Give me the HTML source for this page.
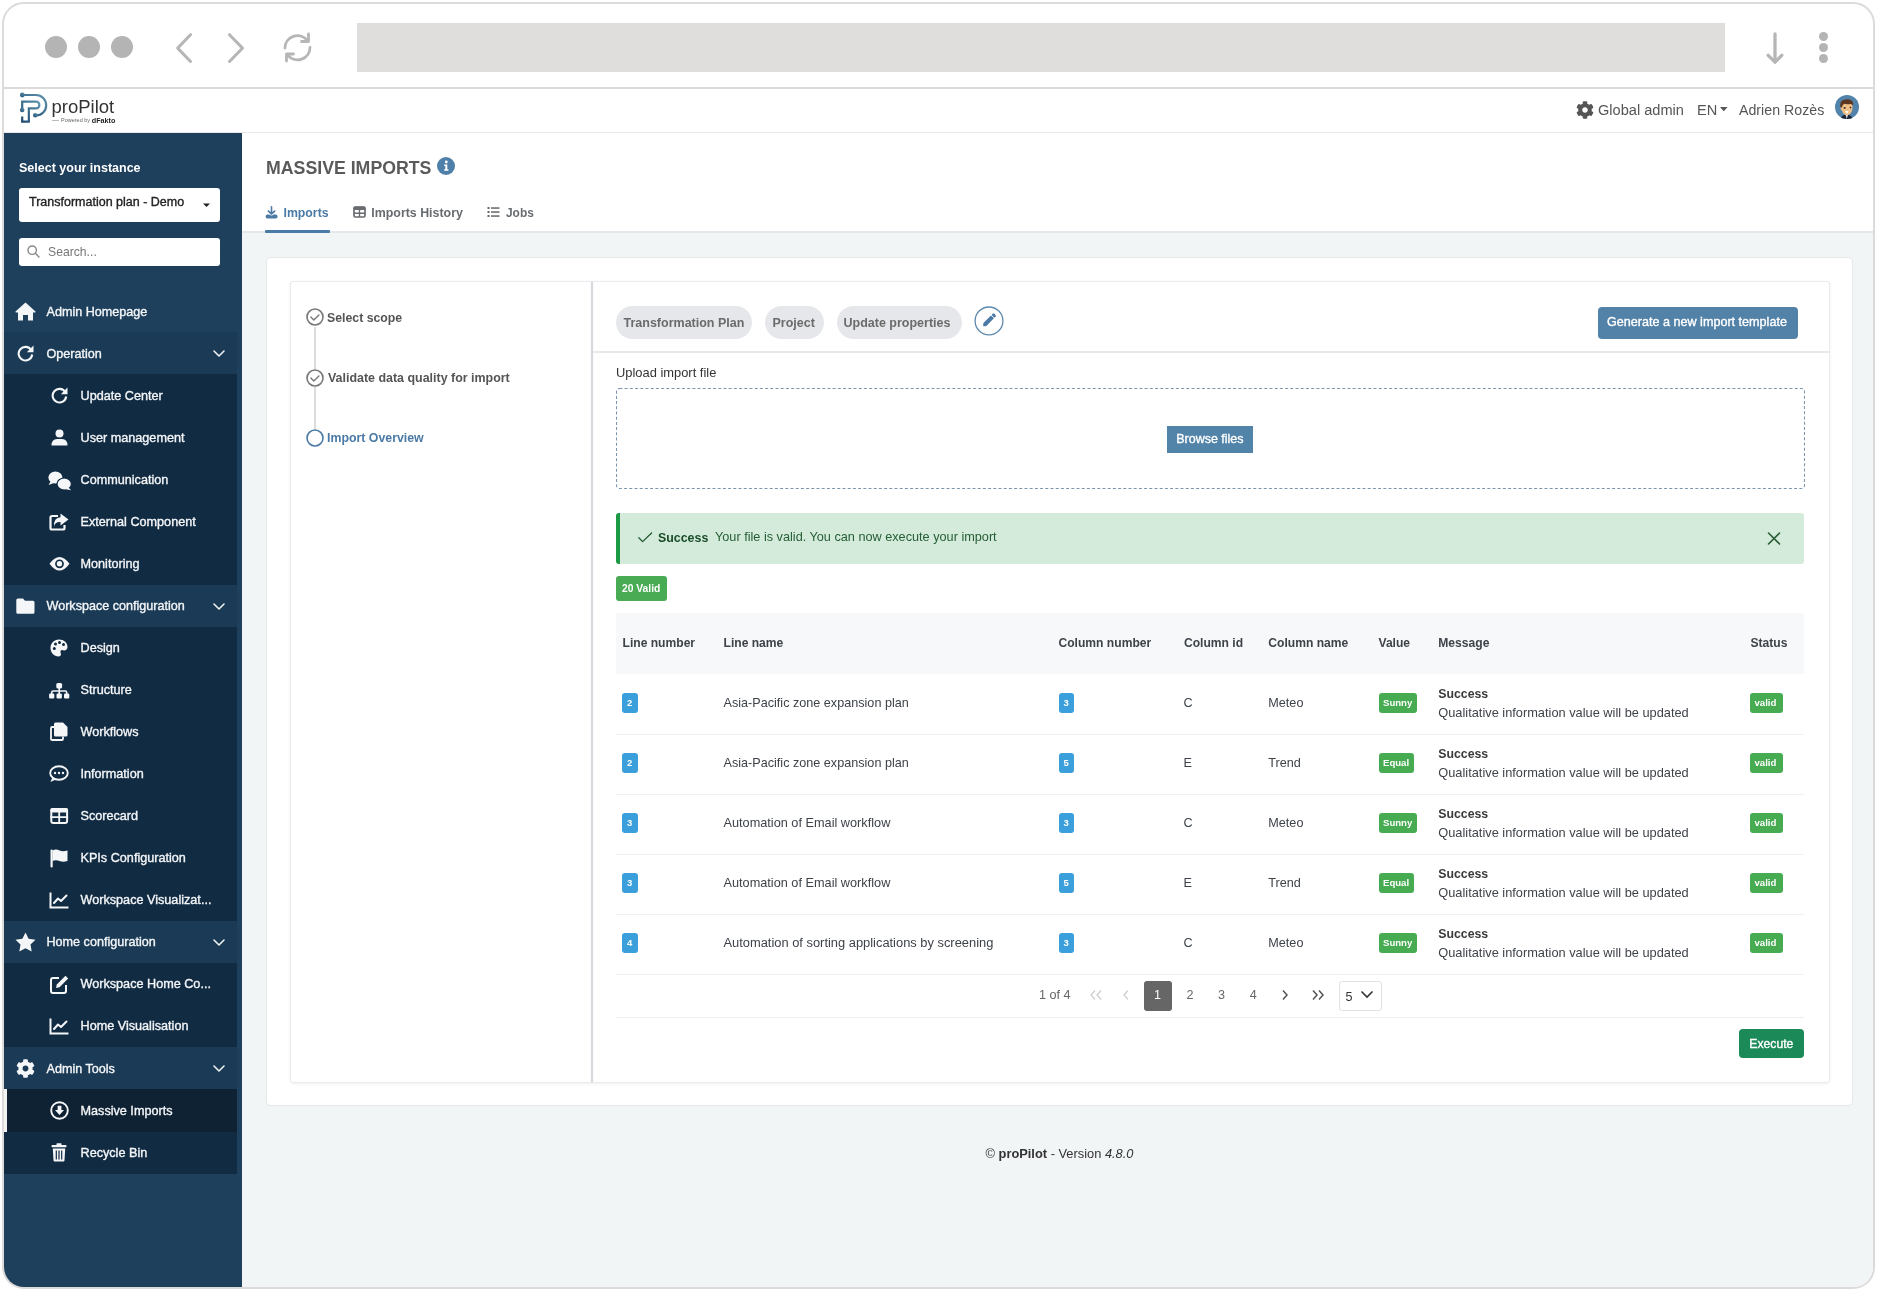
<!DOCTYPE html><html><head><meta charset="utf-8"><style>
html,body{margin:0;padding:0;width:1879px;height:1293px;overflow:hidden;background:#fff;}
body{font-family:"Liberation Sans",sans-serif;position:relative;}
.frame{position:absolute;left:2px;top:2px;width:1873px;height:1287px;box-sizing:border-box;border:2px solid #dcdbd9;border-radius:22px;overflow:hidden;background:#fff;}
.inner{position:absolute;left:-4px;top:-4px;width:1879px;height:1293px;will-change:transform;}
.t{position:absolute;white-space:nowrap;line-height:1;}
.r{position:absolute;}
</style></head><body><div class="frame"><div class="inner">

<div class="r" style="left:45px;top:36px;width:22px;height:22px;background:#b4b4b4;border-radius:50%;"></div>
<div class="r" style="left:78px;top:36px;width:22px;height:22px;background:#b4b4b4;border-radius:50%;"></div>
<div class="r" style="left:111px;top:36px;width:22px;height:22px;background:#b4b4b4;border-radius:50%;"></div>
<svg class="r" style="left:170px;top:28px;" width="30" height="40" viewBox="0 0 30 40"><polyline points="20.5,6.7 7.7,20.1 20.5,33.5" fill="none" stroke="#b6b6b6" stroke-width="3" stroke-linecap="round" stroke-linejoin="round"/></svg>
<svg class="r" style="left:222px;top:28px;" width="30" height="40" viewBox="0 0 30 40"><polyline points="7.5,6.7 20.5,20.1 7.5,33.5" fill="none" stroke="#b6b6b6" stroke-width="3" stroke-linecap="round" stroke-linejoin="round"/></svg>
<svg class="r" style="left:280px;top:30px;" width="36" height="36" viewBox="0 0 36 36"><g fill="none" stroke="#b6b6b6" stroke-width="2.8" stroke-linecap="round" stroke-linejoin="round"><path d="M5,18 A12.5,12.5 0 0 1 27,10"/><polyline points="28.5,4 28.5,11.5 21.5,11.5"/><path d="M30,17.5 A12.5,12.5 0 0 1 8,25.5"/><polyline points="6.5,31 6.5,24 13.5,24"/></g></svg>
<div class="r" style="left:357px;top:23px;width:1368px;height:49px;background:#dfdedc;"></div>
<svg class="r" style="left:1762px;top:28px;" width="26" height="40" viewBox="0 0 26 40"><g fill="none" stroke="#b6b6b6" stroke-width="3.3" stroke-linecap="round" stroke-linejoin="round"><line x1="13" y1="6" x2="13" y2="33.5"/><polyline points="6.2,27.3 13,34.2 19.8,27.3"/></g></svg>
<div class="r" style="left:1819px;top:31.700000000000003px;width:9px;height:9.0px;background:#b4b4b4;border-radius:50%;"></div>
<div class="r" style="left:1819px;top:42.5px;width:9px;height:9.0px;background:#b4b4b4;border-radius:50%;"></div>
<div class="r" style="left:1819px;top:53.7px;width:9px;height:9.0px;background:#b4b4b4;border-radius:50%;"></div>
<div class="r" style="left:4px;top:87px;width:1869px;height:2px;background:#dcdbd9;"></div>
<div class="r" style="left:4px;top:132px;width:1869px;height:1px;background:#e8e8e8;"></div>
<svg class="r" style="left:14px;top:88px;" width="40" height="40" viewBox="0 0 40 40"><defs><linearGradient id="lg" x1="1" y1="0" x2="0" y2="1"><stop offset="0" stop-color="#5e95ae"/><stop offset="1" stop-color="#1f4a70"/></linearGradient></defs><g fill="none" stroke="url(#lg)" stroke-width="2.2"><path d="M8.3,7 H22 A10.2,10.2 0 0 1 22,27.4 L21.3,27.4"/><path d="M8.2,20 V13.6 H22 A3.4,3.4 0 0 1 22,20.4 H14.85 V33.6 H8.2 V28.5"/></g><g fill="url(#lg)"><circle cx="8.35" cy="7" r="2.4"/><circle cx="8.2" cy="22" r="2.3"/><circle cx="21.3" cy="27.3" r="2.3"/></g></svg>
<div class="t " style="left:51.50px;top:97.84px;font-size:18.5px;font-weight:normal;color:#333;">proPilot</div>
<div class="r" style="left:52px;top:120px;width:7px;height:1px;background:#bbb;"></div>
<div class="t " style="left:61.00px;top:118.24px;font-size:5.5px;font-weight:normal;color:#666;">Powered by</div>
<div class="t " style="left:91.80px;top:117.41px;font-size:7.2px;font-weight:bold;color:#222;">dFakto</div>
<svg class="r" style="left:1576px;top:100.5px;" width="18" height="18" viewBox="0 0 512 512"><path fill="#555" d="M487.4 315.7l-42.6-24.6c4.3-23.2 4.3-47 0-70.2l42.6-24.6c4.9-2.8 7.1-8.6 5.5-14-11.1-35.6-30-67.8-54.7-94.6-3.8-4.1-10-5.1-14.8-2.3L380.8 110c-17.9-15.4-38.5-27.3-60.8-35.1V25.8c0-5.6-3.9-10.5-9.4-11.7-36.7-8.2-74.3-7.8-109.2 0-5.5 1.2-9.4 6.1-9.4 11.7V75c-22.2 7.9-42.8 19.8-60.8 35.1L88.7 85.5c-4.9-2.8-11-1.9-14.8 2.3-24.7 26.7-43.6 58.9-54.7 94.6-1.7 5.4.6 11.2 5.5 14L67.3 221c-4.3 23.2-4.3 47 0 70.2l-42.6 24.6c-4.9 2.8-7.1 8.6-5.5 14 11.1 35.6 30 67.8 54.7 94.6 3.8 4.1 10 5.1 14.8 2.3l42.6-24.6c17.9 15.4 38.5 27.3 60.8 35.1v49.2c0 5.6 3.9 10.5 9.4 11.7 36.7 8.2 74.3 7.8 109.2 0 5.5-1.2 9.4-6.1 9.4-11.7v-49.2c22.2-7.9 42.8-19.8 60.8-35.1l42.6 24.6c4.9 2.8 11 1.9 14.8-2.3 24.7-26.7 43.6-58.9 54.7-94.6 1.5-5.5-.7-11.3-5.6-14.1zM256 336c-44.1 0-80-35.9-80-80s35.9-80 80-80 80 35.9 80 80-35.9 80-80 80z"/></svg>
<div class="t " style="left:1597.80px;top:101.93px;font-size:15.2px;font-weight:normal;color:#555;transform:scaleX(0.96);transform-origin:0 0;">Global admin</div>
<div class="t " style="left:1696.80px;top:101.93px;font-size:15.2px;font-weight:normal;color:#555;transform:scaleX(0.96);transform-origin:0 0;">EN</div>
<svg class="r" style="left:1719.5px;top:107px;" width="8" height="5" viewBox="0 0 8 5"><polygon points="0,0 7.5,0 3.75,4.3" fill="#555"/></svg>
<div class="t " style="left:1739.30px;top:101.93px;font-size:15.2px;font-weight:normal;color:#555;transform:scaleX(0.935);transform-origin:0 0;">Adrien Rozès</div>
<svg class="r" style="left:1835px;top:95px;" width="24" height="24" viewBox="0 0 24 24"><defs><clipPath id="av"><circle cx="12" cy="12" r="12"/></clipPath></defs><circle cx="12" cy="12" r="12" fill="#5283ab"/><g clip-path="url(#av)"><path d="M5.5,24 Q6,20 11.5,19.5 Q17,20 17.5,24 Z" fill="#1c2636"/><path d="M10.5,19.5 L11.8,24 L13,19.5 Z" fill="#e8eef4"/><path d="M6,12 Q5.5,9 8,8 L16.5,8.5 Q18,10 17.3,14 Q17,19 12.5,20.3 Q8,20 7,15.5 Q5.6,15 5.5,13 Z" fill="#f0bf85"/><path d="M5.2,11.5 Q4.8,6 9,4.8 Q13,3.5 16.5,5.5 Q18.8,7 18,10.5 Q16.5,8.8 14,9.2 Q11,9.5 9,8.8 Q7,11 6.6,13 Z" fill="#5b3621"/><ellipse cx="9.6" cy="12.9" rx="1" ry="0.9" fill="#2a2420"/><ellipse cx="15.5" cy="12.6" rx="0.9" ry="0.8" fill="#2a2420"/><path d="M10.2,16.3 Q12,15.6 13.6,16.3 Q13.2,18.3 11.9,18.4 Q10.6,18.3 10.2,16.3 Z" fill="#fff"/></g></svg>
<div class="r" style="left:4px;top:133px;width:238px;height:1154px;background:#1f405d;"></div>
<div class="t " style="left:19.00px;top:162.22px;font-size:12.5px;font-weight:bold;color:#fff;">Select your instance</div>
<div class="r" style="left:19px;top:188px;width:200.5px;height:34px;background:#fff;border-radius:3px;"></div>
<div class="t " style="left:29.00px;top:196.32px;font-size:12.5px;font-weight:normal;color:#222;-webkit-text-stroke:0.35px #222;">Transformation plan - Demo</div>
<svg class="r" style="left:203px;top:203px;" width="7" height="5" viewBox="0 0 7 5"><polygon points="0,0.5 7,0.5 3.5,4" fill="#222"/></svg>
<div class="r" style="left:19px;top:238px;width:200.5px;height:28px;background:#fff;border-radius:3px;"></div>
<svg class="r" style="left:27px;top:245px;" width="13" height="13" viewBox="0 0 13 13"><g fill="none" stroke="#888" stroke-width="1.4"><circle cx="5.2" cy="5.2" r="4.2"/><line x1="8.3" y1="8.3" x2="12" y2="12" stroke-linecap="round"/></g></svg>
<div class="t " style="left:48.00px;top:246.47px;font-size:12.2px;font-weight:normal;color:#777;">Search...</div>
<div class="r" style="left:4px;top:332.4px;width:233px;height:42.06px;background:#1a3a55;"></div>
<div class="r" style="left:4px;top:584.76px;width:233px;height:42.059999999999945px;background:#1a3a55;"></div>
<div class="r" style="left:4px;top:921.24px;width:233px;height:42.06000000000006px;background:#1a3a55;"></div>
<div class="r" style="left:4px;top:1047.42px;width:233px;height:42.059999999999945px;background:#1a3a55;"></div>
<div class="r" style="left:4px;top:374.46px;width:233px;height:210.3px;background:#112b42;"></div>
<div class="r" style="left:4px;top:626.8199999999999px;width:233px;height:294.4200000000001px;background:#112b42;"></div>
<div class="r" style="left:4px;top:963.3000000000001px;width:233px;height:84.12px;background:#112b42;"></div>
<div class="r" style="left:4px;top:1089.48px;width:233px;height:84.11999999999989px;background:#112b42;"></div>
<div class="r" style="left:4px;top:1089.48px;width:233px;height:42.059999999999945px;background:#0f2234;"></div>
<div class="r" style="left:4px;top:1089.48px;width:3px;height:42.059999999999945px;background:#f4f4f4;"></div>
<svg class="r" style="left:15px;top:302px;" width="21" height="19" viewBox="0 0 21 19"><path fill="#f4f6f8" d="M10.5,0.5 L20.5,9.5 Q21,10.5 19.8,10.5 L18,10.5 L18,18.5 L13,18.5 L13,13 L8,13 L8,18.5 L3,18.5 L3,10.5 L1.2,10.5 Q0,10.5 0.5,9.5 Z"/></svg>
<div class="t " style="left:46.50px;top:305.53px;font-size:12.6px;font-weight:normal;color:#f4f6f8;-webkit-text-stroke:0.35px #f4f6f8;">Admin Homepage</div>
<svg class="r" style="left:17px;top:345.12999999999994px;" width="17" height="17" viewBox="0 0 17 17"><g fill="none" stroke="#f4f6f8" stroke-width="2.1"><path d="M14.2,5 A6.8,6.8 0 1 0 15.2,9.5"/></g><polygon fill="#f4f6f8" points="16.5,0.5 16.5,7.2 9.8,7.2"/></svg>
<div class="t " style="left:46.50px;top:347.56px;font-size:12.6px;font-weight:normal;color:#f4f6f8;-webkit-text-stroke:0.35px #f4f6f8;">Operation</div>
<svg class="r" style="left:212.5px;top:350.42999999999995px;" width="13" height="8" viewBox="0 0 13 8"><polyline points="1,1 6,6 11,1" fill="none" stroke="#f4f6f8" stroke-width="1.5" stroke-linecap="round" stroke-linejoin="round"/></svg>
<svg class="r" style="left:16px;top:597.79px;" width="19" height="16" viewBox="0 0 19 16"><path d="M1.8,0.5 H7 L9,2.8 H17 Q18.5,2.8 18.5,4.3 V14.2 Q18.5,15.7 17,15.7 H1.8 Q0.3,15.7 0.3,14.2 V2 Q0.3,0.5 1.8,0.5 Z" fill="#f4f6f8"/></svg>
<div class="t " style="left:46.50px;top:599.92px;font-size:12.6px;font-weight:normal;color:#f4f6f8;-webkit-text-stroke:0.35px #f4f6f8;">Workspace configuration</div>
<svg class="r" style="left:212.5px;top:602.79px;" width="13" height="8" viewBox="0 0 13 8"><polyline points="1,1 6,6 11,1" fill="none" stroke="#f4f6f8" stroke-width="1.5" stroke-linecap="round" stroke-linejoin="round"/></svg>
<svg class="r" style="left:15px;top:931.77px;" width="21" height="20" viewBox="0 0 21 20"><polygon fill="#f4f6f8" points="10.5,0.5 13.6,6.7 20.5,7.7 15.5,12.6 16.7,19.5 10.5,16.2 4.3,19.5 5.5,12.6 0.5,7.7 7.4,6.7"/></svg>
<div class="t " style="left:46.50px;top:936.40px;font-size:12.6px;font-weight:normal;color:#f4f6f8;-webkit-text-stroke:0.35px #f4f6f8;">Home configuration</div>
<svg class="r" style="left:212.5px;top:939.27px;" width="13" height="8" viewBox="0 0 13 8"><polyline points="1,1 6,6 11,1" fill="none" stroke="#f4f6f8" stroke-width="1.5" stroke-linecap="round" stroke-linejoin="round"/></svg>
<svg class="r" style="left:16px;top:1058.95px;" width="19" height="19" viewBox="0 0 512 512"><path fill="#f4f6f8" d="M487.4 315.7l-42.6-24.6c4.3-23.2 4.3-47 0-70.2l42.6-24.6c4.9-2.8 7.1-8.6 5.5-14-11.1-35.6-30-67.8-54.7-94.6-3.8-4.1-10-5.1-14.8-2.3L380.8 110c-17.9-15.4-38.5-27.3-60.8-35.1V25.8c0-5.6-3.9-10.5-9.4-11.7-36.7-8.2-74.3-7.8-109.2 0-5.5 1.2-9.4 6.1-9.4 11.7V75c-22.2 7.9-42.8 19.8-60.8 35.1L88.7 85.5c-4.9-2.8-11-1.9-14.8 2.3-24.7 26.7-43.6 58.9-54.7 94.6-1.7 5.4.6 11.2 5.5 14L67.3 221c-4.3 23.2-4.3 47 0 70.2l-42.6 24.6c-4.9 2.8-7.1 8.6-5.5 14 11.1 35.6 30 67.8 54.7 94.6 3.8 4.1 10 5.1 14.8 2.3l42.6-24.6c17.9 15.4 38.5 27.3 60.8 35.1v49.2c0 5.6 3.9 10.5 9.4 11.7 36.7 8.2 74.3 7.8 109.2 0 5.5-1.2 9.4-6.1 9.4-11.7v-49.2c22.2-7.9 42.8-19.8 60.8-35.1l42.6 24.6c4.9 2.8 11 1.9 14.8-2.3 24.7-26.7 43.6-58.9 54.7-94.6 1.5-5.5-.7-11.3-5.6-14.1zM256 336c-44.1 0-80-35.9-80-80s35.9-80 80-80 80 35.9 80 80-35.9 80-80 80z"/></svg>
<div class="t " style="left:46.50px;top:1062.58px;font-size:12.6px;font-weight:normal;color:#f4f6f8;-webkit-text-stroke:0.35px #f4f6f8;">Admin Tools</div>
<svg class="r" style="left:212.5px;top:1065.45px;" width="13" height="8" viewBox="0 0 13 8"><polyline points="1,1 6,6 11,1" fill="none" stroke="#f4f6f8" stroke-width="1.5" stroke-linecap="round" stroke-linejoin="round"/></svg>
<svg class="r" style="left:51px;top:387.19px;" width="17" height="17" viewBox="0 0 17 17"><g fill="none" stroke="#f4f6f8" stroke-width="2.1"><path d="M14.2,5 A6.8,6.8 0 1 0 15.2,9.5"/></g><polygon fill="#f4f6f8" points="16.5,0.5 16.5,7.2 9.8,7.2"/></svg>
<div class="t " style="left:80.50px;top:389.58px;font-size:12.65px;font-weight:normal;color:#f4f6f8;-webkit-text-stroke:0.35px #f4f6f8;">Update Center</div>
<svg class="r" style="left:51px;top:429.04999999999995px;" width="17" height="17" viewBox="0 0 17 17"><circle cx="8.5" cy="4.5" r="4" fill="#f4f6f8"/><path d="M0.5,16.5 Q0.5,10 6,10 L11,10 Q16.5,10 16.5,16.5 Z" fill="#f4f6f8"/></svg>
<div class="t " style="left:80.50px;top:431.64px;font-size:12.65px;font-weight:normal;color:#f4f6f8;-webkit-text-stroke:0.35px #f4f6f8;">User management</div>
<svg class="r" style="left:47.5px;top:470.91px;" width="24" height="20" viewBox="0 0 24 20"><ellipse cx="7.4" cy="6.6" rx="7" ry="6" fill="#f4f6f8"/><path d="M2.5,10.5 L0.6,14 L6,12 Z" fill="#f4f6f8"/><ellipse cx="16.2" cy="13" rx="7.2" ry="6" fill="#f4f6f8" stroke="#112b42" stroke-width="1.2"/><path d="M20.5,16.5 L23.2,19.2 L17.5,18.2 Z" fill="#f4f6f8"/></svg>
<div class="t " style="left:80.50px;top:473.70px;font-size:12.65px;font-weight:normal;color:#f4f6f8;-webkit-text-stroke:0.35px #f4f6f8;">Communication</div>
<svg class="r" style="left:49px;top:512.67px;" width="20" height="18" viewBox="0 0 20 18"><path d="M9,3 H3 Q1.5,3 1.5,4.5 V15 Q1.5,16.5 3,16.5 H14 Q15.5,16.5 15.5,15 V12" fill="none" stroke="#f4f6f8" stroke-width="2.2"/><path d="M11.5,0.5 L19.5,6.5 L11.5,12.5 V9 Q6,8.5 5,13.5 Q4.5,4.5 11.5,4.2 Z" fill="#f4f6f8"/></svg>
<div class="t " style="left:80.50px;top:515.76px;font-size:12.65px;font-weight:normal;color:#f4f6f8;-webkit-text-stroke:0.35px #f4f6f8;">External Component</div>
<svg class="r" style="left:49px;top:556.23px;" width="21" height="16" viewBox="0 0 21 16"><path d="M0.5,7.8 Q10.5,-5.8 20.5,7.8 Q10.5,21.4 0.5,7.8 Z" fill="#f4f6f8"/><circle cx="10.5" cy="7.8" r="4.4" fill="#112b42"/><circle cx="10.5" cy="7.8" r="2.7" fill="#f4f6f8"/></svg>
<div class="t " style="left:80.50px;top:557.82px;font-size:12.65px;font-weight:normal;color:#f4f6f8;-webkit-text-stroke:0.35px #f4f6f8;">Monitoring</div>
<svg class="r" style="left:50px;top:638.8499999999999px;" width="18" height="18" viewBox="0 0 18 18"><path d="M9,0.5 C14,0.5 17.5,3.8 17.5,8 C17.5,11 15,11.8 13,11.2 C11,10.8 10,12 10.7,14 C11.5,16.3 10.5,17.5 8.5,17.5 C4,17.5 0.5,13.5 0.5,9 C0.5,4.2 4,0.5 9,0.5 Z" fill="#f4f6f8"/><g fill="#112b42"><circle cx="4.3" cy="9.5" r="1.5"/><circle cx="5.5" cy="5" r="1.5"/><circle cx="9.5" cy="3.5" r="1.5"/><circle cx="13.5" cy="5.5" r="1.5"/></g></svg>
<div class="t " style="left:80.50px;top:641.94px;font-size:12.65px;font-weight:normal;color:#f4f6f8;-webkit-text-stroke:0.35px #f4f6f8;">Design</div>
<svg class="r" style="left:49px;top:680.91px;" width="21" height="18" viewBox="0 0 21 18"><g fill="#f4f6f8"><rect x="7.3" y="1.9" width="5.8" height="5.6" rx="1.6"/><rect x="0.1" y="12.6" width="5.2" height="4.8" rx="1.2"/><rect x="7.5" y="12.6" width="5.4" height="4.8" rx="1.2"/><rect x="15" y="12.6" width="5.3" height="4.8" rx="1.2"/></g><path d="M10.2,7 V13 M2.7,13 V11.5 Q2.7,10 4.2,10 H16.2 Q17.7,10 17.7,11.5 V13" fill="none" stroke="#f4f6f8" stroke-width="1.6"/></svg>
<div class="t " style="left:80.50px;top:684.00px;font-size:12.65px;font-weight:normal;color:#f4f6f8;-webkit-text-stroke:0.35px #f4f6f8;">Structure</div>
<svg class="r" style="left:50px;top:722.47px;" width="18" height="19" viewBox="0 0 18 19"><path d="M5.5,0.5 H13 L17.5,5 V13 Q17.5,14.5 16,14.5 H5.5 Q4,14.5 4,13 V2 Q4,0.5 5.5,0.5 Z" fill="#f4f6f8"/><path d="M4,5 H2.2 Q1,5 1,6.2 V17 Q1,18 2.2,18 H11.8 Q13,18 13,17 V14.5" fill="none" stroke="#f4f6f8" stroke-width="1.8"/></svg>
<div class="t " style="left:80.50px;top:726.06px;font-size:12.65px;font-weight:normal;color:#f4f6f8;-webkit-text-stroke:0.35px #f4f6f8;">Workflows</div>
<svg class="r" style="left:49px;top:765.03px;" width="20" height="18" viewBox="0 0 20 18"><ellipse cx="10" cy="8" rx="8.8" ry="6.8" fill="none" stroke="#f4f6f8" stroke-width="1.9"/><path d="M3.5,12.5 L1.3,17 L7,14.5" fill="#f4f6f8"/><g fill="#f4f6f8"><circle cx="6" cy="8" r="1.2"/><circle cx="10" cy="8" r="1.2"/><circle cx="14" cy="8" r="1.2"/></g></svg>
<div class="t " style="left:80.50px;top:768.12px;font-size:12.65px;font-weight:normal;color:#f4f6f8;-webkit-text-stroke:0.35px #f4f6f8;">Information</div>
<svg class="r" style="left:49px;top:808.0899999999999px;" width="20" height="17" viewBox="0 0 20 17"><rect x="2.3" y="1.1" width="15.8" height="13.8" rx="2" fill="none" stroke="#f4f6f8" stroke-width="2"/><rect x="1.3" y="0.1" width="17.8" height="4.4" rx="2" fill="#f4f6f8"/><path d="M1.3,9.2 H19.1 M10.2,4 V15" stroke="#f4f6f8" stroke-width="1.8"/></svg>
<div class="t " style="left:80.50px;top:810.18px;font-size:12.65px;font-weight:normal;color:#f4f6f8;-webkit-text-stroke:0.35px #f4f6f8;">Scorecard</div>
<svg class="r" style="left:50px;top:848.65px;" width="18" height="19" viewBox="0 0 18 19"><rect x="0.5" y="0.5" width="2.2" height="18" rx="1" fill="#f4f6f8"/><path d="M2.5,1.5 Q6,-0.5 9.5,1.5 Q13,3 17.5,1.5 V12 Q13,13.5 9.5,12 Q6,10.5 2.5,12 Z" fill="#f4f6f8"/></svg>
<div class="t " style="left:80.50px;top:852.24px;font-size:12.65px;font-weight:normal;color:#f4f6f8;-webkit-text-stroke:0.35px #f4f6f8;">KPIs Configuration</div>
<svg class="r" style="left:49px;top:891.7099999999999px;" width="20" height="17" viewBox="0 0 20 17"><path d="M1.5,0.5 V15.5 H19.5" fill="none" stroke="#f4f6f8" stroke-width="2"/><polyline points="5,11 9,6.5 12,9 17.5,3.5" fill="none" stroke="#f4f6f8" stroke-width="2" stroke-linejoin="round" stroke-linecap="round"/></svg>
<div class="t " style="left:80.50px;top:894.30px;font-size:12.65px;font-weight:normal;color:#f4f6f8;-webkit-text-stroke:0.35px #f4f6f8;">Workspace Visualizat...</div>
<svg class="r" style="left:50px;top:974.83px;" width="19" height="19" viewBox="0 0 19 19"><path d="M9,3 H3 Q1,3 1,5 V16 Q1,18 3,18 H14 Q16,18 16,16 V10" fill="none" stroke="#f4f6f8" stroke-width="2"/><path d="M15.5,0.8 L18.2,3.5 L9.5,12.2 L6,13 L6.8,9.5 Z" fill="#f4f6f8"/></svg>
<div class="t " style="left:80.50px;top:978.42px;font-size:12.65px;font-weight:normal;color:#f4f6f8;-webkit-text-stroke:0.35px #f4f6f8;">Workspace Home Co...</div>
<svg class="r" style="left:49px;top:1017.8900000000001px;" width="20" height="17" viewBox="0 0 20 17"><path d="M1.5,0.5 V15.5 H19.5" fill="none" stroke="#f4f6f8" stroke-width="2"/><polyline points="5,11 9,6.5 12,9 17.5,3.5" fill="none" stroke="#f4f6f8" stroke-width="2" stroke-linejoin="round" stroke-linecap="round"/></svg>
<div class="t " style="left:80.50px;top:1020.48px;font-size:12.65px;font-weight:normal;color:#f4f6f8;-webkit-text-stroke:0.35px #f4f6f8;">Home Visualisation</div>
<svg class="r" style="left:50px;top:1101.01px;" width="19" height="19" viewBox="0 0 19 19"><circle cx="9.5" cy="9.5" r="8.3" fill="none" stroke="#f4f6f8" stroke-width="1.9"/><path d="M7.6,4.8 H11.4 V9 H14 L9.5,14 L5,9 H7.6 Z" fill="#f4f6f8"/></svg>
<div class="t " style="left:80.50px;top:1104.60px;font-size:12.65px;font-weight:normal;color:#f4f6f8;-webkit-text-stroke:0.35px #f4f6f8;">Massive Imports</div>
<svg class="r" style="left:51px;top:1143.07px;" width="16" height="19" viewBox="0 0 16 19"><rect x="0.5" y="2" width="15" height="2.3" rx="0.8" fill="#f4f6f8"/><rect x="5.5" y="0.3" width="5" height="2" rx="0.6" fill="#f4f6f8"/><path d="M1.8,5.5 H14.2 L13.5,17.5 Q13.4,18.6 12.3,18.6 H3.7 Q2.6,18.6 2.5,17.5 Z" fill="#f4f6f8"/><path d="M5.3,7.5 V16.5 M8,7.5 V16.5 M10.7,7.5 V16.5" stroke="#112b42" stroke-width="1.2"/></svg>
<div class="t " style="left:80.50px;top:1146.66px;font-size:12.65px;font-weight:normal;color:#f4f6f8;-webkit-text-stroke:0.35px #f4f6f8;">Recycle Bin</div>
<div class="r" style="left:242px;top:232px;width:1631px;height:1055px;background:#f2f5f6;"></div>
<div class="r" style="left:242px;top:231px;width:1631px;height:2px;background:#e4e8ec;"></div>
<div class="t " style="left:265.70px;top:158.74px;font-size:18.15px;font-weight:bold;color:#5a5a5a;transform:scaleX(0.977);transform-origin:0 0;">MASSIVE IMPORTS</div>
<svg class="r" style="left:436.5px;top:157px;" width="18" height="18" viewBox="0 0 18 18"><circle cx="9" cy="9" r="9" fill="#4f80a9"/><circle cx="9.3" cy="5" r="1.4" fill="#fff"/><path d="M7.2,7.6 H10.3 V12.3 H11.4 V13.8 H7.2 V12.3 H8.3 V9.1 H7.2 Z" fill="#fff"/></svg>
<svg class="r" style="left:265px;top:206px;" width="13" height="13" viewBox="0 0 13 13"><g fill="none" stroke="#4a7aa5" stroke-linecap="round" stroke-linejoin="round"><path d="M6.5,0.8 V7.4" stroke-width="1.6"/><polyline points="3.4,5.1 6.5,7.9 9.6,5.1" stroke-width="1.7"/></g><path d="M2.4,8.6 H4.4 Q6.5,10.4 8.6,8.6 H10.8 Q12.6,8.6 12.6,10.5 Q12.6,12.4 10.8,12.4 H2.4 Q0.6,12.4 0.6,10.5 Q0.6,8.6 2.4,8.6 Z" fill="#4a7aa5"/></svg>
<div class="t " style="left:283.50px;top:207.09px;font-size:12.3px;font-weight:bold;color:#4a7aa5;">Imports</div>
<div class="r" style="left:265px;top:230px;width:65px;height:3px;background:#4a7aa5;border-radius:1px;"></div>
<svg class="r" style="left:353px;top:206px;" width="13" height="12" viewBox="0 0 13 12"><rect x="1" y="1" width="11" height="10" rx="1.5" fill="none" stroke="#686c70" stroke-width="1.7"/><rect x="0.5" y="0.5" width="12" height="3.4" rx="1.5" fill="#686c70"/><path d="M1,7.2 H12 M6.5,3.5 V11" stroke="#686c70" stroke-width="1.4"/></svg>
<div class="t " style="left:371.30px;top:207.00px;font-size:12.4px;font-weight:bold;color:#686c70;">Imports History</div>
<svg class="r" style="left:487px;top:206px;" width="13" height="12" viewBox="0 0 13 12"><g fill="#666"><rect x="0.5" y="1" width="2" height="2"/><rect x="0.5" y="5" width="2" height="2"/><rect x="0.5" y="9" width="2" height="2"/><rect x="4" y="1.3" width="8.5" height="1.5"/><rect x="4" y="5.3" width="8.5" height="1.5"/><rect x="4" y="9.3" width="8.5" height="1.5"/></g></svg>
<div class="t " style="left:506.00px;top:207.93px;font-size:11.9px;font-weight:bold;color:#686c70;">Jobs</div>
<div class="r" style="left:267px;top:258px;width:1585px;height:847px;background:#fff;border-radius:4px;box-shadow:0 0 0 1px #e6e7e8,0 1px 2px rgba(0,0,0,0.03);"></div>
<div class="r" style="left:290.5px;top:282px;width:1538.5px;height:799.5px;background:#fff;border-radius:2px;box-shadow:0 0 0 1px #e9ebee,0 1px 4px rgba(0,0,0,0.10);"></div>
<div class="r" style="left:591px;top:282px;width:2px;height:799.5px;background:#d5d8dc;box-shadow:0 0 3px rgba(0,0,0,0.07);"></div>
<div class="r" style="left:314.3px;top:326.5px;width:2.0px;height:42.5px;background:#dcdcdc;"></div>
<div class="r" style="left:314.3px;top:386.5px;width:2.0px;height:42.5px;background:#dcdcdc;"></div>
<svg class="r" style="left:305.5px;top:308.2px;" width="18" height="18" viewBox="0 0 18 18"><circle cx="9" cy="9" r="8" fill="#fff" stroke="#777" stroke-width="1.6"/><polyline points="4.9,9 7.8,11.9 12.9,7" fill="none" stroke="#777" stroke-width="1.4" stroke-linecap="round" stroke-linejoin="round"/></svg>
<svg class="r" style="left:305.5px;top:368.6px;" width="18" height="18" viewBox="0 0 18 18"><circle cx="9" cy="9" r="8" fill="#fff" stroke="#777" stroke-width="1.6"/><polyline points="4.9,9 7.8,11.9 12.9,7" fill="none" stroke="#777" stroke-width="1.4" stroke-linecap="round" stroke-linejoin="round"/></svg>
<svg class="r" style="left:305.5px;top:428.5px;" width="18" height="18" viewBox="0 0 18 18"><circle cx="9" cy="9" r="8" fill="#fff" stroke="#4a7aa5" stroke-width="1.6"/></svg>
<div class="t " style="left:327.00px;top:312.19px;font-size:12.3px;font-weight:bold;color:#555;">Select scope</div>
<div class="t " style="left:328.00px;top:372.16px;font-size:12.45px;font-weight:bold;color:#555;">Validate data quality for import</div>
<div class="t " style="left:327.00px;top:432.25px;font-size:12.35px;font-weight:bold;color:#4a7aa5;">Import Overview</div>
<div class="r" style="left:616px;top:306px;width:136px;height:33px;background:#e5e7ea;border-radius:17px;"></div>
<div class="t " style="left:623.50px;top:316.82px;font-size:12.5px;font-weight:bold;color:#6b6b6b;">Transformation Plan</div>
<div class="r" style="left:765px;top:306px;width:58.5px;height:33px;background:#e5e7ea;border-radius:17px;"></div>
<div class="t " style="left:772.50px;top:316.82px;font-size:12.5px;font-weight:bold;color:#6b6b6b;">Project</div>
<div class="r" style="left:836.5px;top:306px;width:125.5px;height:33px;background:#e5e7ea;border-radius:17px;"></div>
<div class="t " style="left:843.50px;top:316.82px;font-size:12.5px;font-weight:bold;color:#6b6b6b;">Update properties</div>
<svg class="r" style="left:973.5px;top:305.5px;" width="30" height="30" viewBox="0 0 30 30"><circle cx="15" cy="14.9" r="13.9" fill="#fff" stroke="#5e89ae" stroke-width="1.3"/><g transform="rotate(-45 15.1 14.2)" fill="#4a7aa5"><path d="M9.5,12.1 H19.8 V16.3 H9.5 Q7.5,15.5 6.9,14.2 Q7.5,12.9 9.5,12.1 Z"/><rect x="20.5" y="12.1" width="2.9" height="4.2" rx="1.3"/></g></svg>
<div class="r" style="left:1597.5px;top:306.5px;width:200.5px;height:32.5px;background:#5282a8;border-radius:4px;"></div>
<div class="t " style="left:1607.00px;top:316.23px;font-size:12.6px;font-weight:normal;color:#fff;-webkit-text-stroke:0.35px #fff;">Generate a new import template</div>
<div class="r" style="left:593px;top:350.5px;width:1236px;height:2.0px;background:#e6e8ea;"></div>
<div class="t " style="left:616.00px;top:367.08px;font-size:12.9px;font-weight:normal;color:#333;">Upload import file</div>
<svg class="r" style="left:616px;top:388px;" width="1189" height="101" viewBox="0 0 1189 101"><rect x="0.5" y="0.5" width="1188" height="100" rx="3" fill="none" stroke="#7d96ad" stroke-width="1.1" stroke-dasharray="3 2.2"/></svg>
<div class="r" style="left:1167px;top:425.5px;width:86px;height:27.0px;background:#5283a9;"></div>
<div class="t " style="left:1176.20px;top:433.32px;font-size:12.5px;font-weight:normal;color:#fff;-webkit-text-stroke:0.35px #fff;">Browse files</div>
<div class="r" style="left:616px;top:512.5px;width:1188px;height:51.5px;background:#d4eadb;border-radius:3px;"></div>
<div class="r" style="left:616px;top:512.5px;width:4px;height:51.5px;background:#1d9a46;border-radius:3px 0 0 3px;"></div>
<svg class="r" style="left:637px;top:531px;" width="17" height="13" viewBox="0 0 17 13"><polyline points="1.8,6.8 5.6,10.6 14.6,2" fill="none" stroke="#1f5a30" stroke-width="1.3" stroke-linecap="round" stroke-linejoin="round"/></svg>
<div class="t " style="left:658.00px;top:531.70px;font-size:12.4px;font-weight:bold;color:#1a4d28;">Success</div>
<div class="t " style="left:715.00px;top:531.45px;font-size:12.7px;font-weight:normal;color:#245e34;">Your file is valid. You can now execute your import</div>
<svg class="r" style="left:1767px;top:531.5px;" width="14" height="13" viewBox="0 0 14 13"><path d="M1.5,1 L12.5,12 M12.5,1 L1.5,12" stroke="#255c33" stroke-width="1.6" stroke-linecap="round"/></svg>
<div class="r" style="left:616px;top:576px;width:50.5px;height:24.5px;background:#49ab54;border-radius:3px;"></div>
<div class="t " style="left:622.00px;top:583.78px;font-size:10.3px;font-weight:bold;color:#fff;">20 Valid</div>
<div class="r" style="left:616px;top:613px;width:1188px;height:60.5px;background:#f7f8fa;"></div>
<div class="t " style="left:622.50px;top:637.46px;font-size:12.1px;font-weight:bold;color:#3e4349;">Line number</div>
<div class="t " style="left:723.50px;top:637.46px;font-size:12.1px;font-weight:bold;color:#3e4349;">Line name</div>
<div class="t " style="left:1058.50px;top:637.46px;font-size:12.1px;font-weight:bold;color:#3e4349;">Column number</div>
<div class="t " style="left:1184.00px;top:637.46px;font-size:12.1px;font-weight:bold;color:#3e4349;">Column id</div>
<div class="t " style="left:1268.30px;top:637.46px;font-size:12.1px;font-weight:bold;color:#3e4349;">Column name</div>
<div class="t " style="left:1378.50px;top:637.46px;font-size:12.1px;font-weight:bold;color:#3e4349;">Value</div>
<div class="t " style="left:1438.30px;top:637.46px;font-size:12.1px;font-weight:bold;color:#3e4349;">Message</div>
<div class="t " style="left:1750.50px;top:637.46px;font-size:12.1px;font-weight:bold;color:#3e4349;">Status</div>
<div class="r" style="left:616px;top:733.5px;width:1188px;height:1.0px;background:#eff1f3;"></div>
<div class="r" style="left:622px;top:692.5px;width:16px;height:20.5px;background:#3a9fdb;border-radius:3px;"></div>
<div class="t " style="left:627.00px;top:697.96px;font-size:9.5px;font-weight:bold;color:#fff;">2</div>
<div class="t " style="left:723.50px;top:697.30px;font-size:12.64px;font-weight:normal;color:#3e4349;">Asia-Pacific zone expansion plan</div>
<div class="r" style="left:1058.5px;top:692.5px;width:15.5px;height:20.5px;background:#3a9fdb;border-radius:3px;"></div>
<div class="t " style="left:1063.40px;top:697.96px;font-size:9.5px;font-weight:bold;color:#fff;">3</div>
<div class="t " style="left:1183.50px;top:697.29px;font-size:12.65px;font-weight:normal;color:#3e4349;">C</div>
<div class="t " style="left:1268.30px;top:697.29px;font-size:12.65px;font-weight:normal;color:#3e4349;">Meteo</div>
<div class="r" style="left:1378.5px;top:692.5px;width:38.0px;height:20.5px;background:#47ab52;border-radius:3px;"></div>
<div class="t " style="left:1383.00px;top:697.77px;font-size:9.6px;font-weight:bold;color:#fff;">Sunny</div>
<div class="t " style="left:1438.30px;top:688.09px;font-size:12.3px;font-weight:bold;color:#3a3a3a;">Success</div>
<div class="t " style="left:1438.30px;top:706.86px;font-size:12.8px;font-weight:normal;color:#3e4349;">Qualitative information value will be updated</div>
<div class="r" style="left:1750px;top:692.5px;width:32.5px;height:20.5px;background:#47ab52;border-radius:3px;"></div>
<div class="t " style="left:1754.50px;top:697.77px;font-size:9.6px;font-weight:bold;color:#fff;">valid</div>
<div class="r" style="left:616px;top:793.5px;width:1188px;height:1.0px;background:#eff1f3;"></div>
<div class="r" style="left:622px;top:752.5px;width:16px;height:20.5px;background:#3a9fdb;border-radius:3px;"></div>
<div class="t " style="left:627.00px;top:757.96px;font-size:9.5px;font-weight:bold;color:#fff;">2</div>
<div class="t " style="left:723.50px;top:757.30px;font-size:12.64px;font-weight:normal;color:#3e4349;">Asia-Pacific zone expansion plan</div>
<div class="r" style="left:1058.5px;top:752.5px;width:15.5px;height:20.5px;background:#3a9fdb;border-radius:3px;"></div>
<div class="t " style="left:1063.40px;top:757.96px;font-size:9.5px;font-weight:bold;color:#fff;">5</div>
<div class="t " style="left:1183.50px;top:757.29px;font-size:12.65px;font-weight:normal;color:#3e4349;">E</div>
<div class="t " style="left:1268.30px;top:757.29px;font-size:12.65px;font-weight:normal;color:#3e4349;">Trend</div>
<div class="r" style="left:1378.5px;top:752.5px;width:35.5px;height:20.5px;background:#47ab52;border-radius:3px;"></div>
<div class="t " style="left:1383.00px;top:757.77px;font-size:9.6px;font-weight:bold;color:#fff;">Equal</div>
<div class="t " style="left:1438.30px;top:748.09px;font-size:12.3px;font-weight:bold;color:#3a3a3a;">Success</div>
<div class="t " style="left:1438.30px;top:766.86px;font-size:12.8px;font-weight:normal;color:#3e4349;">Qualitative information value will be updated</div>
<div class="r" style="left:1750px;top:752.5px;width:32.5px;height:20.5px;background:#47ab52;border-radius:3px;"></div>
<div class="t " style="left:1754.50px;top:757.77px;font-size:9.6px;font-weight:bold;color:#fff;">valid</div>
<div class="r" style="left:616px;top:853.5px;width:1188px;height:1.0px;background:#eff1f3;"></div>
<div class="r" style="left:622px;top:812.5px;width:16px;height:20.5px;background:#3a9fdb;border-radius:3px;"></div>
<div class="t " style="left:627.00px;top:817.96px;font-size:9.5px;font-weight:bold;color:#fff;">3</div>
<div class="t " style="left:723.50px;top:817.23px;font-size:12.72px;font-weight:normal;color:#3e4349;">Automation of Email workflow</div>
<div class="r" style="left:1058.5px;top:812.5px;width:15.5px;height:20.5px;background:#3a9fdb;border-radius:3px;"></div>
<div class="t " style="left:1063.40px;top:817.96px;font-size:9.5px;font-weight:bold;color:#fff;">3</div>
<div class="t " style="left:1183.50px;top:817.29px;font-size:12.65px;font-weight:normal;color:#3e4349;">C</div>
<div class="t " style="left:1268.30px;top:817.29px;font-size:12.65px;font-weight:normal;color:#3e4349;">Meteo</div>
<div class="r" style="left:1378.5px;top:812.5px;width:38.0px;height:20.5px;background:#47ab52;border-radius:3px;"></div>
<div class="t " style="left:1383.00px;top:817.77px;font-size:9.6px;font-weight:bold;color:#fff;">Sunny</div>
<div class="t " style="left:1438.30px;top:808.09px;font-size:12.3px;font-weight:bold;color:#3a3a3a;">Success</div>
<div class="t " style="left:1438.30px;top:826.86px;font-size:12.8px;font-weight:normal;color:#3e4349;">Qualitative information value will be updated</div>
<div class="r" style="left:1750px;top:812.5px;width:32.5px;height:20.5px;background:#47ab52;border-radius:3px;"></div>
<div class="t " style="left:1754.50px;top:817.77px;font-size:9.6px;font-weight:bold;color:#fff;">valid</div>
<div class="r" style="left:616px;top:913.5px;width:1188px;height:1.0px;background:#eff1f3;"></div>
<div class="r" style="left:622px;top:872.5px;width:16px;height:20.5px;background:#3a9fdb;border-radius:3px;"></div>
<div class="t " style="left:627.00px;top:877.96px;font-size:9.5px;font-weight:bold;color:#fff;">3</div>
<div class="t " style="left:723.50px;top:877.23px;font-size:12.72px;font-weight:normal;color:#3e4349;">Automation of Email workflow</div>
<div class="r" style="left:1058.5px;top:872.5px;width:15.5px;height:20.5px;background:#3a9fdb;border-radius:3px;"></div>
<div class="t " style="left:1063.40px;top:877.96px;font-size:9.5px;font-weight:bold;color:#fff;">5</div>
<div class="t " style="left:1183.50px;top:877.29px;font-size:12.65px;font-weight:normal;color:#3e4349;">E</div>
<div class="t " style="left:1268.30px;top:877.29px;font-size:12.65px;font-weight:normal;color:#3e4349;">Trend</div>
<div class="r" style="left:1378.5px;top:872.5px;width:35.5px;height:20.5px;background:#47ab52;border-radius:3px;"></div>
<div class="t " style="left:1383.00px;top:877.77px;font-size:9.6px;font-weight:bold;color:#fff;">Equal</div>
<div class="t " style="left:1438.30px;top:868.09px;font-size:12.3px;font-weight:bold;color:#3a3a3a;">Success</div>
<div class="t " style="left:1438.30px;top:886.86px;font-size:12.8px;font-weight:normal;color:#3e4349;">Qualitative information value will be updated</div>
<div class="r" style="left:1750px;top:872.5px;width:32.5px;height:20.5px;background:#47ab52;border-radius:3px;"></div>
<div class="t " style="left:1754.50px;top:877.77px;font-size:9.6px;font-weight:bold;color:#fff;">valid</div>
<div class="r" style="left:616px;top:973.5px;width:1188px;height:1.0px;background:#eff1f3;"></div>
<div class="r" style="left:622px;top:932.5px;width:16px;height:20.5px;background:#3a9fdb;border-radius:3px;"></div>
<div class="t " style="left:627.00px;top:937.96px;font-size:9.5px;font-weight:bold;color:#fff;">4</div>
<div class="t " style="left:723.50px;top:937.10px;font-size:12.88px;font-weight:normal;color:#3e4349;">Automation of sorting applications by screening</div>
<div class="r" style="left:1058.5px;top:932.5px;width:15.5px;height:20.5px;background:#3a9fdb;border-radius:3px;"></div>
<div class="t " style="left:1063.40px;top:937.96px;font-size:9.5px;font-weight:bold;color:#fff;">3</div>
<div class="t " style="left:1183.50px;top:937.29px;font-size:12.65px;font-weight:normal;color:#3e4349;">C</div>
<div class="t " style="left:1268.30px;top:937.29px;font-size:12.65px;font-weight:normal;color:#3e4349;">Meteo</div>
<div class="r" style="left:1378.5px;top:932.5px;width:38.0px;height:20.5px;background:#47ab52;border-radius:3px;"></div>
<div class="t " style="left:1383.00px;top:937.77px;font-size:9.6px;font-weight:bold;color:#fff;">Sunny</div>
<div class="t " style="left:1438.30px;top:928.09px;font-size:12.3px;font-weight:bold;color:#3a3a3a;">Success</div>
<div class="t " style="left:1438.30px;top:946.86px;font-size:12.8px;font-weight:normal;color:#3e4349;">Qualitative information value will be updated</div>
<div class="r" style="left:1750px;top:932.5px;width:32.5px;height:20.5px;background:#47ab52;border-radius:3px;"></div>
<div class="t " style="left:1754.50px;top:937.77px;font-size:9.6px;font-weight:bold;color:#fff;">valid</div>
<div class="t " style="left:1039.00px;top:989.03px;font-size:12.6px;font-weight:normal;color:#666;">1 of 4</div>
<svg class="r" style="left:1088.5px;top:989px;" width="16" height="12" viewBox="0 0 16 12"><polyline points="6,1.5 2,6 6,10.5" fill="none" stroke="#cfcfcf" stroke-width="1.3"/><polyline points="12,1.5 8,6 12,10.5" fill="none" stroke="#cfcfcf" stroke-width="1.3"/></svg>
<svg class="r" style="left:1121px;top:989px;" width="10" height="12" viewBox="0 0 10 12"><polyline points="7,1.5 3,6 7,10.5" fill="none" stroke="#cfcfcf" stroke-width="1.3"/></svg>
<div class="r" style="left:1144px;top:981px;width:28px;height:29.5px;background:#666;border-radius:3px;"></div>
<div class="t " style="left:1154.00px;top:989.03px;font-size:12.6px;font-weight:normal;color:#fff;">1</div>
<div class="t " style="left:1186.50px;top:989.03px;font-size:12.6px;font-weight:normal;color:#666;">2</div>
<div class="t " style="left:1218.10px;top:989.03px;font-size:12.6px;font-weight:normal;color:#666;">3</div>
<div class="t " style="left:1249.70px;top:989.03px;font-size:12.6px;font-weight:normal;color:#666;">4</div>
<svg class="r" style="left:1280px;top:989px;" width="10" height="12" viewBox="0 0 10 12"><polyline points="3,1.5 7,6 3,10.5" fill="none" stroke="#555" stroke-width="1.5"/></svg>
<svg class="r" style="left:1309.5px;top:989px;" width="16" height="12" viewBox="0 0 16 12"><polyline points="3,1.5 7,6 3,10.5" fill="none" stroke="#555" stroke-width="1.5"/><polyline points="9,1.5 13,6 9,10.5" fill="none" stroke="#555" stroke-width="1.5"/></svg>
<div class="r" style="left:1338.5px;top:981px;width:43.5px;height:29.5px;box-sizing:border-box;border:1px solid #dfe3e8;border-radius:3px;background:#fff;"></div>
<div class="t " style="left:1345.50px;top:990.63px;font-size:12.6px;font-weight:normal;color:#333;">5</div>
<svg class="r" style="left:1360px;top:990px;" width="14" height="9" viewBox="0 0 14 9"><polyline points="1.5,1.5 7,7 12.5,1.5" fill="none" stroke="#333" stroke-width="1.6"/></svg>
<div class="r" style="left:616px;top:1017px;width:1188px;height:1px;background:#eceef0;"></div>
<div class="r" style="left:1739px;top:1028.5px;width:65px;height:29.0px;background:#1b8a58;border-radius:4px;"></div>
<div class="t " style="left:1749.30px;top:1037.77px;font-size:12.2px;font-weight:normal;color:#fff;-webkit-text-stroke:0.35px #fff;">Execute</div>
<div class="t " style="left:985.50px;top:1147.62px;font-size:12.85px;font-weight:normal;color:#333;">© <b>proPilot</b> - Version <i>4.8.0</i></div>
</div></div></body></html>
